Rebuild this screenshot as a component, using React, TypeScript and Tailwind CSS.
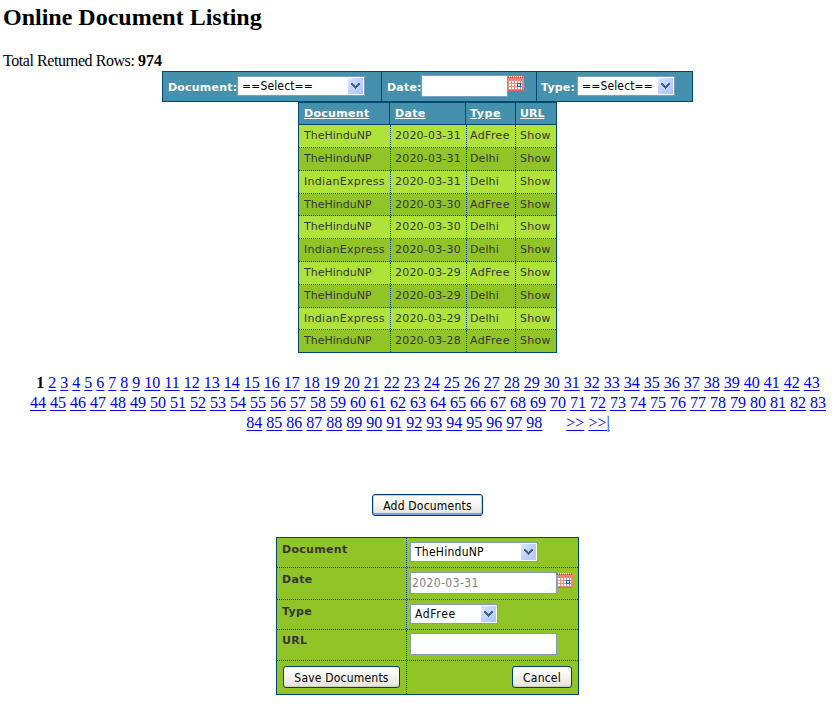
import React from "react";

const rows = [
  ["TheHinduNP", "2020-03-31", "AdFree"],
  ["TheHinduNP", "2020-03-31", "Delhi"],
  ["IndianExpress", "2020-03-31", "Delhi"],
  ["TheHinduNP", "2020-03-30", "AdFree"],
  ["TheHinduNP", "2020-03-30", "Delhi"],
  ["IndianExpress", "2020-03-30", "Delhi"],
  ["TheHinduNP", "2020-03-29", "AdFree"],
  ["TheHinduNP", "2020-03-29", "Delhi"],
  ["IndianExpress", "2020-03-29", "Delhi"],
  ["TheHinduNP", "2020-03-28", "AdFree"],
];
const rowHeights = ["h-[23px]", "h-[23px]", "h-[23px]", "h-[22px]", "h-[23px]", "h-[23px]", "h-[23px]", "h-[23px]", "h-[22px]", "h-[22px]"];

function Select({ label, width, tracking }: { label: string; width: string; tracking: string }) {
  return (
    <button className={`flex h-5 shrink-0 items-center justify-between border border-[#7f9db9] bg-white pl-1 pr-px font-['DejaVu_Sans_Condensed',sans-serif] text-[12px] leading-[18px] text-black ${width}`}>
      <span className={tracking}>{label}</span>
      <svg width="15" height="16" viewBox="0 0 15 16" shapeRendering="crispEdges">
        <defs>
          <linearGradient id="arrowFace" x1="0" y1="0" x2="1" y2="1">
            <stop offset="0" stopColor="#e1eafe" />
            <stop offset="0.4" stopColor="#c3d3fd" />
            <stop offset="1" stopColor="#aec8f7" />
          </linearGradient>
        </defs>
        <rect width="15" height="16" rx="1" fill="url(#arrowFace)" />
        <path d="M3 5h2v1h1v1h1v1h1v-1h1v-1h1v-1h2v2h-1v1h-1v1h-1v1h-1v1h-1v-1h-1v-1h-1v-1h-1v-1h-1z" fill="#4d6185" />
      </svg>
    </button>
  );
}

function Calendar() {
  return (
    <svg className="mt-px shrink-0" width="16" height="15" viewBox="0 0 16 15" shapeRendering="crispEdges">
      <rect width="16" height="15" fill="#f08a7d" />
      <rect width="16" height="4" fill="#ee8277" />
      <path d="M1 0h1v1h-1zm2 0h1v1h-1zm2 0h1v1h-1zm2 0h1v1h-1zm2 0h1v1h-1zm2 0h1v1h-1zm2 0h1v1h-1z" fill="#fff" />
      <path d="M0 1h1v1h-1zm2 0h1v1h-1zm2 0h1v1h-1zm2 0h1v1h-1zm2 0h1v1h-1zm2 0h1v1h-1zm2 0h1v1h-1zm2 0h1v1h-1z" fill="#b9473f" />
      <path d="M1 5h2v2H1zm3 0h2v2H4zm3 0h2v2H7zm3 0h2v2h-2zm3 0h1v2h-1zM1 8h2v2H1zm3 0h2v2H4zm3 0h2v2H7zm6 0h1v2h-1zM1 11h2v2H1zm3 0h2v2H4zm3 0h2v2H7zm3 0h2v2h-2zm3 0h1v2h-1z" fill="#fff" />
      <path d="M9 7h4v4H9z" fill="#1c62e0" />
      <path d="M10 8h2v2h-2z" fill="#d6e8ff" />
      <path d="M0 14h16v1H0z" fill="#dc685d" />
    </svg>
  );
}

function Button({ children, width, active = false }: { children: string; width: string; active?: boolean }) {
  return (
    <button className={`flex h-[22px] items-center justify-center rounded-[3px] border border-[#003c74] bg-linear-to-b from-white via-[#f5f4ef] to-[#e5e1d8] pt-px font-['DejaVu_Sans_Condensed',sans-serif] text-[12px] font-normal leading-[18px] tracking-[0.2px] text-black ${width} ${active ? "shadow-[inset_0_-2px_0_#7b9fe0,inset_0_0_0_1px_#b9cff7]" : "shadow-[inset_0_-1px_0_#d0ccc0]"}`}>
      {children}
    </button>
  );
}

const filterCell = "flex h-full items-start pt-1 pl-[5px] text-white";
const filterLabel = "shrink-0 pt-[5px] text-[11px] font-bold leading-[14px] tracking-[0.2px]";

function FormRow({ label, height, children, last = false }: { label: React.ReactNode; height: string; children: React.ReactNode; last?: boolean }) {
  return (
    <div className={`flex ${height} ${last ? "" : "border-b border-dotted border-[#00486f]"}`}>
      <div className={`w-[130px] shrink-0 border-r border-dotted border-[#00486f] pl-[5px] text-[11px] font-bold leading-[14px] tracking-[0.3px] text-[#363636] ${last ? "pt-1" : "pt-[5px]"}`}>{label}</div>
      <div className="flex grow items-start pl-[3px] pt-1">{children}</div>
    </div>
  );
}

function Link({ children }: { children: React.ReactNode }) {
  return <a className="text-[#0000e6] underline decoration-1 underline-offset-2">{children}</a>;
}

function PageLine({ from, to, current = false }: { from: number; to: number; current?: boolean }) {
  const pages = Array.from({ length: to - from + 1 }, (_, i) => from + i);
  return (
    <>
      {current && <><b>1</b>{" "}</>}
      {pages.map((n) => <React.Fragment key={n}><Link>{n}</Link>{n < to ? " " : ""}</React.Fragment>)}
    </>
  );
}

export default function App() {
  return (
    <main className="h-[715px] w-[837px] overflow-hidden bg-white font-['Liberation_Serif',serif] text-base text-black">
      <h1 className="h-[51px] pl-[3px] pt-1 text-2xl font-bold leading-[27px]">Online Document Listing</h1>
      <p className="h-5 pl-[3px] leading-5 tracking-[-0.44px]">Total Returned Rows: <b className="tracking-normal">974</b></p>

      <section className="ml-[162px] flex h-[31px] w-[531px] border border-[#00486f] bg-[#4591ad] font-['DejaVu_Sans',sans-serif]">
        <div className={`${filterCell} w-[219px] border-r border-[#00486f]`}>
          <span className={`${filterLabel} w-[69px]`}>Document:</span>
          <Select label="==Select==" width="w-[128px]" tracking="tracking-[0.15px]" />
        </div>
        <div className={`${filterCell} w-[155px] border-r border-[#00486f]`}>
          <span className={`${filterLabel} w-[34px]`}>Date:</span>
          <div className="-mt-px h-[22px] w-[87px] border border-[#7f9db9] bg-white" />
          <div className="-mt-px"><Calendar /></div>
        </div>
        <div className={`${filterCell} grow pl-1`}>
          <span className={`${filterLabel} -ml-px w-9`}>Type:</span>
          <Select label="==Select==" width="w-[98px]" tracking="tracking-[0.15px]" />
        </div>
      </section>

      <section className="ml-[298px] h-[251px] w-[259px] border border-[#00486f] font-['DejaVu_Sans',sans-serif] text-[11px] text-[#363636]">
        <div className="flex h-[22px] border-b border-[#00486f] bg-[#4591ad] font-bold leading-[21px] tracking-[0.3px] text-white">
          <span className="w-[91px] border-r border-[#00486f] pl-[5px] underline underline-offset-1">Document</span>
          <span className="w-[76px] border-r border-[#00486f] pl-[5px] underline underline-offset-1">Date</span>
          <span className="w-[50px] border-r border-[#00486f] pl-1 tracking-[0.6px] underline underline-offset-1">Type</span>
          <span className="pl-1 tracking-normal underline underline-offset-1">URL</span>
        </div>
        {rows.map(([doc, date, type], i) => (
          <div key={i} className={`flex leading-[22px] ${rowHeights[i]} ${i % 2 ? "bg-[#91c427]" : "bg-[#afe33a]"} ${i < 9 ? "border-b border-dotted border-[#00486f]" : ""}`}>
            <span className={`w-[92px] border-r border-dotted border-[#00486f] pl-[5px] ${doc === "IndianExpress" ? "tracking-[0.3px]" : ""}`}>{doc}</span>
            <span className="w-[76px] border-r border-dotted border-[#00486f] pl-1 tracking-[0.2px]">{date}</span>
            <span className={`w-[49px] border-r border-dotted border-[#00486f] pl-[3px] ${type === "AdFree" ? "tracking-[0.35px]" : "tracking-[0.1px]"}`}>{type}</span>
            <span className="pl-1 tracking-[0.3px]">Show</span>
          </div>
        ))}
      </section>

      <nav className="ml-[19px] mt-5 w-[818px] whitespace-nowrap text-center leading-5">
        <div><PageLine from={2} to={43} current /></div>
        <div><PageLine from={44} to={83} /></div>
        <div><PageLine from={84} to={98} /><span className="inline-block w-6" /><Link>&gt;&gt;</Link> <Link>&gt;&gt;|</Link></div>
      </nav>

      <div className="ml-[372px] mt-[61px]"><Button width="w-[111px]" active>Add Documents</Button></div>

      <form className="ml-[276px] mt-[21px] flex h-[158px] w-[303px] flex-col border border-[#00486f] bg-[#91c427] font-['DejaVu_Sans',sans-serif]">
        <FormRow label="Document" height="h-[30px]"><Select label="TheHinduNP" width="w-[128px]" tracking="tracking-[0.25px]" /></FormRow>
        <FormRow label="Date" height="h-8">
          <div className="h-[22px] w-[147px] border border-[#7f9db9] bg-white pl-px font-['DejaVu_Sans_Condensed',sans-serif] text-[12px] leading-[21px] tracking-[0.4px] text-[#808080]">2020-03-31</div>
          <Calendar />
        </FormRow>
        <FormRow label="Type" height="h-[30px]"><Select label="AdFree" width="w-[88px]" tracking="tracking-[0.65px]" /></FormRow>
        <FormRow label={<div className="-mt-px">URL</div>} height="h-[31px]"><div className="-mt-px h-[22px] w-[147px] border border-[#7f9db9] bg-white" /></FormRow>
        <FormRow label={<div className="ml-px pt-px"><Button width="w-[117px]">Save Documents</Button></div>} height="h-[33px]" last>
          <div className="ml-[102px] pt-px"><Button width="w-[60px]">Cancel</Button></div>
        </FormRow>
      </form>
    </main>
  );
}
